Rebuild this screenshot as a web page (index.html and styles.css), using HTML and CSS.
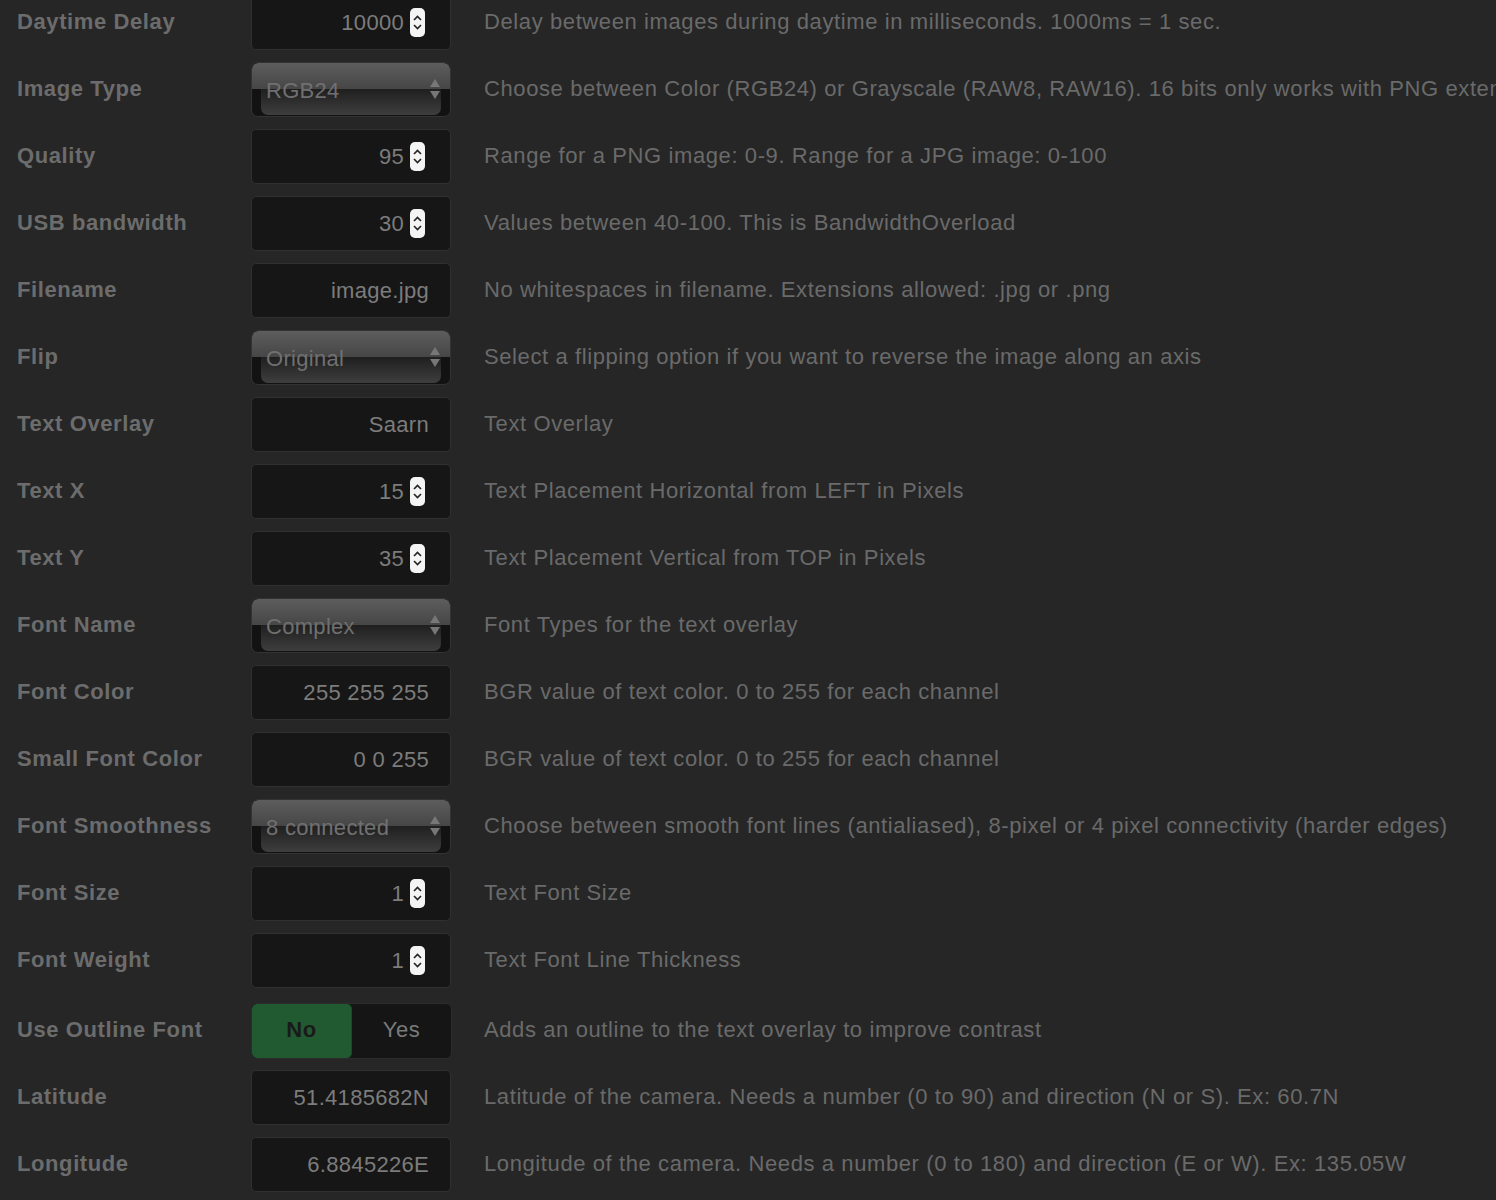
FILE: index.html
```html
<!DOCTYPE html>
<html lang="en">
<head>
  <meta charset="UTF-8" />
  <title>Camera Settings</title>
  <link rel="stylesheet" href="styles.css">
</head>
<body>
  <div class="settings">
    <div class="row">
      <div class="label">Daytime Delay</div>
      <div class="field number"><span>10000</span><svg class="spin" width="15" height="29" viewBox="0 0 15 29"><rect x="0" y="0" width="15" height="29" rx="5" fill="#f4f4f4"/><path d="M4 12 L7.5 8.5 L11 12 M4 17 L7.5 20.5 L11 17" fill="none" stroke="#222" stroke-width="1.6"/></svg></div>
      <div class="desc">Delay between images during daytime in milliseconds. 1000ms = 1 sec.</div>
    </div>
    <div class="row">
      <div class="label">Image Type</div>
      <div class="select"><span>RGB24</span><i class="arrows"></i></div>
      <div class="desc">Choose between Color (RGB24) or Grayscale (RAW8, RAW16). 16 bits only works with PNG extension.</div>
    </div>
    <div class="row">
      <div class="label">Quality</div>
      <div class="field number"><span>95</span><svg class="spin" width="15" height="29" viewBox="0 0 15 29"><rect x="0" y="0" width="15" height="29" rx="5" fill="#f4f4f4"/><path d="M4 12 L7.5 8.5 L11 12 M4 17 L7.5 20.5 L11 17" fill="none" stroke="#222" stroke-width="1.6"/></svg></div>
      <div class="desc">Range for a PNG image: 0-9. Range for a JPG image: 0-100</div>
    </div>
    <div class="row">
      <div class="label">USB bandwidth</div>
      <div class="field number"><span>30</span><svg class="spin" width="15" height="29" viewBox="0 0 15 29"><rect x="0" y="0" width="15" height="29" rx="5" fill="#f4f4f4"/><path d="M4 12 L7.5 8.5 L11 12 M4 17 L7.5 20.5 L11 17" fill="none" stroke="#222" stroke-width="1.6"/></svg></div>
      <div class="desc">Values between 40-100. This is BandwidthOverload</div>
    </div>
    <div class="row">
      <div class="label">Filename</div>
      <div class="field"><span>image.jpg</span></div>
      <div class="desc">No whitespaces in filename. Extensions allowed: .jpg or .png</div>
    </div>
    <div class="row">
      <div class="label">Flip</div>
      <div class="select"><span>Original</span><i class="arrows"></i></div>
      <div class="desc">Select a flipping option if you want to reverse the image along an axis</div>
    </div>
    <div class="row">
      <div class="label">Text Overlay</div>
      <div class="field"><span>Saarn</span></div>
      <div class="desc">Text Overlay</div>
    </div>
    <div class="row">
      <div class="label">Text X</div>
      <div class="field number"><span>15</span><svg class="spin" width="15" height="29" viewBox="0 0 15 29"><rect x="0" y="0" width="15" height="29" rx="5" fill="#f4f4f4"/><path d="M4 12 L7.5 8.5 L11 12 M4 17 L7.5 20.5 L11 17" fill="none" stroke="#222" stroke-width="1.6"/></svg></div>
      <div class="desc">Text Placement Horizontal from LEFT in Pixels</div>
    </div>
    <div class="row">
      <div class="label">Text Y</div>
      <div class="field number"><span>35</span><svg class="spin" width="15" height="29" viewBox="0 0 15 29"><rect x="0" y="0" width="15" height="29" rx="5" fill="#f4f4f4"/><path d="M4 12 L7.5 8.5 L11 12 M4 17 L7.5 20.5 L11 17" fill="none" stroke="#222" stroke-width="1.6"/></svg></div>
      <div class="desc">Text Placement Vertical from TOP in Pixels</div>
    </div>
    <div class="row">
      <div class="label">Font Name</div>
      <div class="select"><span>Complex</span><i class="arrows"></i></div>
      <div class="desc">Font Types for the text overlay</div>
    </div>
    <div class="row">
      <div class="label">Font Color</div>
      <div class="field"><span>255 255 255</span></div>
      <div class="desc">BGR value of text color. 0 to 255 for each channel</div>
    </div>
    <div class="row">
      <div class="label">Small Font Color</div>
      <div class="field"><span>0 0 255</span></div>
      <div class="desc">BGR value of text color. 0 to 255 for each channel</div>
    </div>
    <div class="row">
      <div class="label">Font Smoothness</div>
      <div class="select"><span>8 connected</span><i class="arrows"></i></div>
      <div class="desc">Choose between smooth font lines (antialiased), 8-pixel or 4 pixel connectivity (harder edges)</div>
    </div>
    <div class="row">
      <div class="label">Font Size</div>
      <div class="field number"><span>1</span><svg class="spin" width="15" height="29" viewBox="0 0 15 29"><rect x="0" y="0" width="15" height="29" rx="5" fill="#f4f4f4"/><path d="M4 12 L7.5 8.5 L11 12 M4 17 L7.5 20.5 L11 17" fill="none" stroke="#222" stroke-width="1.6"/></svg></div>
      <div class="desc">Text Font Size</div>
    </div>
    <div class="row">
      <div class="label">Font Weight</div>
      <div class="field number"><span>1</span><svg class="spin" width="15" height="29" viewBox="0 0 15 29"><rect x="0" y="0" width="15" height="29" rx="5" fill="#f4f4f4"/><path d="M4 12 L7.5 8.5 L11 12 M4 17 L7.5 20.5 L11 17" fill="none" stroke="#222" stroke-width="1.6"/></svg></div>
      <div class="desc">Text Font Line Thickness</div>
    </div>
    <div class="row toggle-row">
      <div class="label">Use Outline Font</div>
      <div class="toggle"><span class="opt on">No</span><span class="opt">Yes</span></div>
      <div class="desc">Adds an outline to the text overlay to improve contrast</div>
    </div>
    <div class="row">
      <div class="label">Latitude</div>
      <div class="field"><span>51.4185682N</span></div>
      <div class="desc">Latitude of the camera. Needs a number (0 to 90) and direction (N or S). Ex: 60.7N</div>
    </div>
    <div class="row">
      <div class="label">Longitude</div>
      <div class="field"><span>6.8845226E</span></div>
      <div class="desc">Longitude of the camera. Needs a number (0 to 180) and direction (E or W). Ex: 135.05W</div>
    </div>
  </div>
</body>
</html>
```

FILE: styles.css
```css
html, body {
  margin: 0;
  background: #262626;
  overflow: hidden;
}
body {
  font-family: "Liberation Sans", Arial, sans-serif;
  font-size: 22px;
  letter-spacing: 0.6px;
  color: #6b6b6b;
  padding-left: 17px;
}
.settings {
  margin-top: -11px;
}
.row {
  display: grid;
  grid-template-columns: 201px 200px auto;
  column-gap: 33px;
  align-items: center;
  padding: 6px 0;
  white-space: nowrap;
}
.label {
  font-weight: bold;
  color: #6c6c6c;
  margin-top: -2px;
}
.desc {
  color: #6a6a6a;
  margin-top: -2px;
}
.field {
  box-sizing: border-box;
  height: 55px;
  background: #161616;
  border: 1px solid #303030;
  border-radius: 5px;
  display: flex;
  align-items: center;
  justify-content: flex-end;
  padding-right: 21px;
  color: #7c7c7c;
  letter-spacing: 0.3px;
}
.field.number {
  padding-right: 25px;
}
.spin {
  margin-left: 6px;
  display: block;
}
.select {
  position: relative;
  box-sizing: border-box;
  height: 55px;
  border: 1px solid #333;
  border-radius: 7px;
  background: #121212;
  overflow: hidden;
  display: flex;
  align-items: center;
  padding-left: 14px;
  color: #707070;
  letter-spacing: 0.3px;
}
.select::before {
  content: "";
  position: absolute;
  left: 0;
  right: 0;
  top: 0;
  height: 26px;
  background: linear-gradient(#5d5d5d, #464646);
  border-radius: 6px 6px 0 0;
}
.select::after {
  content: "";
  position: absolute;
  left: 9px;
  right: 9px;
  top: 26px;
  bottom: 1px;
  background: linear-gradient(#1f1f1f, #3e3e3e);
  border-radius: 0 0 7px 7px;
}
.select span {
  position: relative;
  z-index: 1;
  margin-top: 2px;
}
.arrows {
  position: absolute;
  z-index: 1;
  right: 10px;
  top: 16px;
  width: 10px;
  height: 20px;
}
.arrows::before, .arrows::after {
  content: "";
  position: absolute;
  left: 0;
  border-left: 5px solid transparent;
  border-right: 5px solid transparent;
}
.arrows::before {
  top: 0;
  border-bottom: 8px solid #777;
}
.arrows::after {
  bottom: 0;
  border-top: 8px solid #777;
}
.toggle-row {
  padding-top: 9px;
  padding-bottom: 5px;
}
.toggle {
  box-sizing: border-box;
  height: 56px;
  width: 201px;
  display: flex;
  background: #151515;
  border: 1px solid #2c2c2c;
  border-radius: 6px;
  overflow: hidden;
}
.opt {
  flex: 1;
  display: flex;
  align-items: center;
  justify-content: center;
  color: #7a7a7a;
  padding-bottom: 3px;
}
.opt.on {
  background: #215a30;
  border-right: 1px solid #1c4a28;
  border-radius: 5px;
  color: #1a1a1a;
  font-weight: bold;
}
```
